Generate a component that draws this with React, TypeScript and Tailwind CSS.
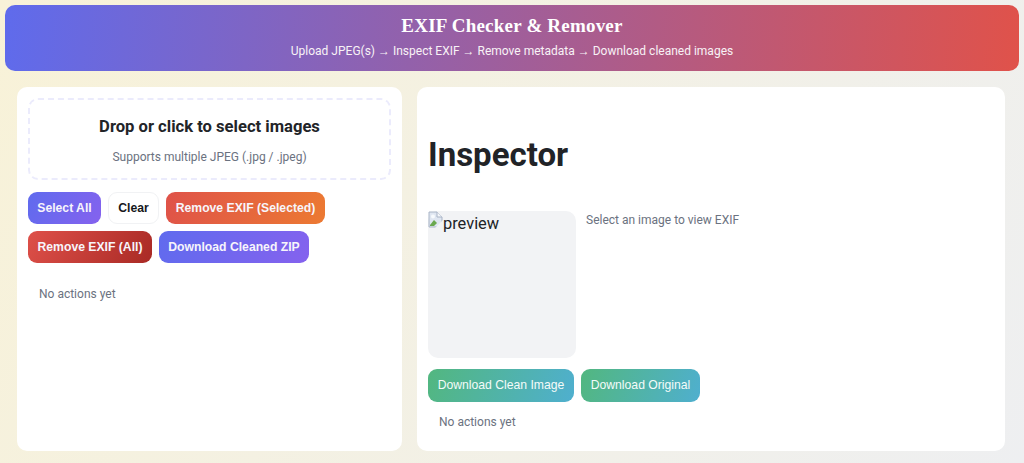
import React from 'react'

const roboto = "font-['Roboto',sans-serif]"
const arial = "font-['Liberation_Sans',Arial,sans-serif]"

function BrokenImageIcon() {
  return (
    <svg width="15" height="17" viewBox="0 0 15 17" className="shrink-0">
      <path d="M1 1h8l5 5v10H1z" fill="#dfe6f1" stroke="#a9b4c6" strokeWidth="1" />
      <path d="M2 14l4-5 3 3-3 3H2z" fill="#6aa84f" />
      <path d="M3 5.5a2 2 0 0 1 4 0 2 2 0 0 1-4 0z" fill="#f7fafd" />
      <path d="M9 1v5h5" fill="#f4f6fa" stroke="#a9b4c6" strokeWidth="1" />
      <path d="M7 17l8-8v8z" fill="#f2f3f5" />
    </svg>
  )
}

export default function App() {
  return (
    <div className={`h-[463px] w-[1024px] overflow-hidden bg-[linear-gradient(120deg,#f8f2d8,#eeeff1)] ${roboto}`}>
      <div className="px-[5px] pt-[5px]">
        <header className="flex h-[66px] flex-col items-center rounded-[10px] bg-[linear-gradient(95deg,#5f6bec,#e0524a)] pt-[11px] text-white">
          <h1 className="font-['Liberation_Serif',serif] text-[19px] leading-[20px] font-bold tracking-[0.2px]">
            EXIF Checker &amp; Remover
          </h1>
          <p className="mt-[6px] text-[12px] leading-[18px] text-[#f8f2f6]">
            Upload JPEG(s) → Inspect EXIF → Remove metadata → Download cleaned images
          </p>
        </header>
      </div>

      <main className="mt-[16px] flex gap-[15px] pr-[19px] pl-[17px]">
        {/* Left panel */}
        <section className="flex h-[364px] w-[385px] flex-col rounded-[10px] bg-white p-[11px]">
          <div className="flex h-[82px] w-[363px] flex-col items-center rounded-[10px] border-2 border-dashed border-[#ebebfc] pt-[15px]">
            <h3 className="text-[16.6px] leading-[24px] font-bold text-[#222428]">Drop or click to select images</h3>
            <p className="mt-[9px] text-[12px] leading-[18px] text-[#6b7280]">Supports multiple JPEG (.jpg / .jpeg)</p>
          </div>

          <div className={`mt-[12px] flex flex-wrap gap-[7px] text-[12.2px] font-bold text-[#f7f5fb] ${arial}`}>
            <button className="h-[32px] w-[73px] rounded-[9px] bg-[linear-gradient(120deg,#5f6bee,#8562ee)]">Select All</button>
            <button className="h-[32px] w-[51px] rounded-[9px] border border-[#f1f2f4] bg-white text-[#16181c]">Clear</button>
            <button className="h-[32px] w-[159px] rounded-[9px] bg-[linear-gradient(110deg,#df5249,#ec7a32)]">Remove EXIF (Selected)</button>
            <button className="h-[32px] w-[124px] rounded-[9px] bg-[linear-gradient(120deg,#de5049,#a92a25)]">Remove EXIF (All)</button>
            <button className="h-[32px] w-[150px] rounded-[9px] bg-[linear-gradient(120deg,#5f6bee,#8562ee)]">Download Cleaned ZIP</button>
          </div>

          <p className="mt-[22px] pl-[11px] text-[12px] leading-[18px] text-[#6b7280]">No actions yet</p>
        </section>

        {/* Right panel */}
        <section className="flex h-[364px] w-[588px] flex-col rounded-[10px] bg-white px-[11px]">
          <h2 className="mt-[47px] text-[33px] leading-[42px] font-bold text-[#212327]">Inspector</h2>

          <div className="mt-[35px] flex gap-[10px]">
            <div className="flex h-[147px] w-[148px] rounded-[10px] bg-[#f2f3f5] text-[16.4px] leading-[24px] text-[#212327]">
              <div className="flex h-[24px] items-start">
                <BrokenImageIcon />
                <span className="pt-px">preview</span>
              </div>
            </div>
            <p className="text-[12px] leading-[18px] text-[#6b7280]">Select an image to view EXIF</p>
          </div>

          <div className={`mt-[11px] flex gap-[7px] text-[12.2px] font-medium text-[#f4fbf9] ${arial}`}>
            <button className="h-[33px] w-[146px] rounded-[9px] bg-[linear-gradient(110deg,#52b77f,#4fafcf)]">Download Clean Image</button>
            <button className="h-[33px] w-[119px] rounded-[9px] bg-[linear-gradient(110deg,#52b77f,#4fafcf)]">Download Original</button>
          </div>

          <p className="mt-[11px] pl-[11px] text-[12px] leading-[18px] text-[#6b7280]">No actions yet</p>
        </section>
      </main>
    </div>
  )
}
